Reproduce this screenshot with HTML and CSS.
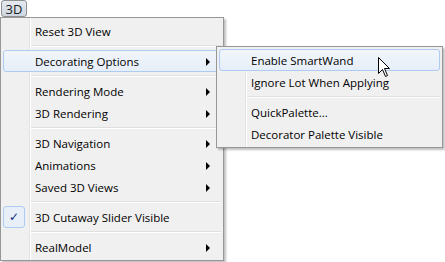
FILE: index.html
```html
<!DOCTYPE html>
<html lang="en">
<head>
    <meta charset="UTF-8">
    <title>3D Menu</title>
    <link rel="stylesheet" href="styles.css">
</head>
<body>
    <div class="screen">
        <button class="menu-button">3D</button>

        <div class="menu main-menu">
            <div class="item">Reset 3D View</div>
            <div class="sep"></div>
            <div class="item hot sub">Decorating Options</div>
            <div class="sep"></div>
            <div class="item sub">Rendering Mode</div>
            <div class="item sub">3D Rendering</div>
            <div class="sep"></div>
            <div class="item sub">3D Navigation</div>
            <div class="item sub">Animations</div>
            <div class="item sub">Saved 3D Views</div>
            <div class="sep"></div>
            <div class="item checked"><span class="check">&#10003;</span>3D Cutaway Slider Visible</div>
            <div class="sep"></div>
            <div class="item sub">RealModel</div>
        </div>

        <!-- Decorating Options submenu -->
        <div class="menu sub-menu">
            <div class="item hot">Enable SmartWand</div>
            <div class="item">Ignore Lot When Applying</div>
            <div class="sep"></div>
            <div class="item">QuickPalette...</div>
            <div class="item">Decorator Palette Visible</div>
        </div>

        <svg class="cursor" width="13" height="21" viewBox="0 0 13 21">
            <path d="M0.5 0.5 L0.5 16.5 L4.5 12.5 L7.5 19.5 L9.5 18.5 L6.5 11.5 L11.5 11.5 Z" fill="#fff" stroke="#000" stroke-width="1"/>
        </svg>
    </div>
</body>
</html>
```

FILE: styles.css
```css
body {
    margin: 0;
    background-color: #fff;
    font-family: 'Open Sans', 'Noto Sans', sans-serif;
    font-size: 11.5px;
    color: #000;
}
.screen {
    position: relative;
    width: 445px;
    height: 262px;
    overflow: hidden;
}
.menu-button {
    display: block;
    margin: 0 0 0 1px;
    width: 26px;
    height: 17px;
    padding: 0;
    border: 1px solid #8e8f8f;
    border-radius: 3px;
    background: linear-gradient(#e5eaf0, #cdd6e0);
    font-family: inherit;
    font-size: 13px;
    line-height: 14px;
    color: #1e1e1e;
}
.menu {
    background-color: #f0f0f0;
    border: 1px solid #979797;
    padding: 2px;
    box-shadow: 2px 2px 2px rgba(0, 0, 0, 0.25);
    background-image: linear-gradient(to right, transparent 28px, #e2e3e3 28px, #e2e3e3 29px, #fff 29px, #fff 30px, transparent 30px);
}
.main-menu {
    width: 218px;
}
.sub-menu {
    position: absolute;
    left: 216px;
    top: 46px;
    width: 221px;
}
.item {
    position: relative;
    height: 22px;
    line-height: 21px;
    padding-left: 31px;
    border: 1px solid transparent;
    border-radius: 3px;
    box-sizing: border-box;
    white-space: nowrap;
}
.item.hot {
    border-color: #aeccf1;
    background: linear-gradient(#f2f6fb, #e6eef9);
}
.item.sub::after {
    content: "";
    position: absolute;
    right: 10px;
    top: 7px;
    border-left: 4px solid #000;
    border-top: 4px solid transparent;
    border-bottom: 4px solid transparent;
}
.check {
    position: absolute;
    left: 0;
    top: 0;
    width: 20px;
    height: 20px;
    border: 1px solid #aeccf1;
    border-radius: 3px;
    background-color: #e8eff8;
    text-align: center;
    line-height: 20px;
    color: #0c2a7a;
    font-family: 'DejaVu Sans', sans-serif;
    font-size: 12px;
    font-weight: bold;
    margin: -1px 0 0 -1px;
}
.sep {
    height: 8px;
    margin-left: 28px;
    background: linear-gradient(transparent 3px, #e0e0e0 3px, #e0e0e0 4px, #fff 4px, #fff 5px, transparent 5px);
}
.cursor {
    position: absolute;
    left: 378px;
    top: 57px;
}
```
